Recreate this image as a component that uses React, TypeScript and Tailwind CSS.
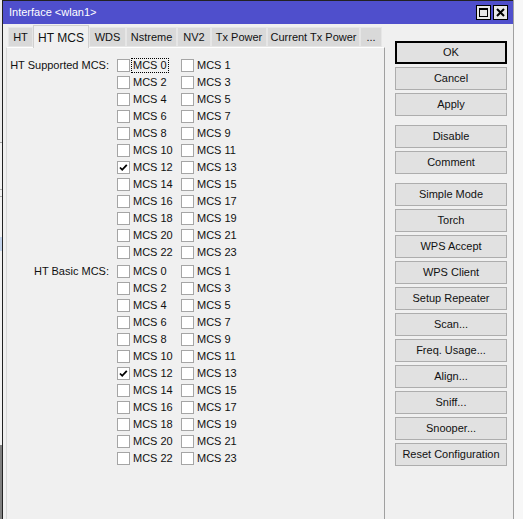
import React from 'react';

// Tabs along the top of the interface window
const tabs = [
  { name: 'HT', w: 'w-[25px]' },
  { name: 'HT MCS', w: 'w-[56px]', active: true },
  { name: 'WDS', w: 'w-[37px]' },
  { name: 'Nstreme', w: 'w-[51px]' },
  { name: 'NV2', w: 'w-[34px]' },
  { name: 'Tx Power', w: 'w-[56px]' },
  { name: 'Current Tx Power', w: 'w-[93px]' },
  { name: '...', w: 'w-[22px]' },
];

// Side buttons, grouped; groups are separated by a larger gap
const buttonGroups = [
  ['OK', 'Cancel', 'Apply'],
  ['Disable', 'Comment'],
  [
    'Simple Mode',
    'Torch',
    'WPS Accept',
    'WPS Client',
    'Setup Repeater',
    'Scan...',
    'Freq. Usage...',
    'Align...',
    'Sniff...',
    'Snooper...',
    'Reset Configuration',
  ],
];

const CheckBox = ({ checked }: { checked?: boolean }) => (
  <div className="w-[13px] h-[13px] shrink-0 bg-white border border-[#a5a5a5] flex items-center justify-center">
    {checked && (
      <svg width="11" height="11" viewBox="0 0 11 11">
        <polyline points="2,5.5 4.2,7.8 8.8,2.8" fill="none" stroke="#000" strokeWidth="1.8" />
      </svg>
    )}
  </div>
);

const McsCell = ({ n, checked, focus }: { n: number; checked?: boolean; focus?: boolean }) => (
  <div className="w-[64px] h-[17px] flex items-center gap-[3px]">
    <CheckBox checked={checked} />
    <span className={focus ? '-ml-[2px] px-[1px] leading-[13px] border border-dotted border-black' : ''}>
      MCS {n}
    </span>
  </div>
);

const McsSection = ({ label, checked, focusFirst }: { label: string; checked: number[]; focusFirst?: boolean }) => {
  const rows = Array.from({ length: 12 }, (_, i) => i * 2);
  return (
    <div className="flex">
      <div className="w-[103px] h-[17px] flex items-center justify-end pr-[1px]">{label}</div>
      <div className="ml-[7px] flex flex-col">
        {rows.map((n) => (
          <div key={n} className="flex">
            <McsCell n={n} checked={checked.includes(n)} focus={focusFirst && n === 0} />
            <McsCell n={n + 1} checked={checked.includes(n + 1)} />
          </div>
        ))}
      </div>
    </div>
  );
};

const SideButton = ({ text }: { text: string }) => (
  <div
    className={
      text === 'OK'
        ? 'h-[23px] flex items-center justify-center bg-[#e1e1e1] border-2 border-black'
        : 'h-[23px] flex items-center justify-center bg-[#e1e1e1] border border-[#adadad]'
    }
  >
    {text}
  </div>
);

const App = () => {
  return (
    <div
      className="flex w-[523px] h-[519px] overflow-hidden bg-[#f0f0f0] text-[11px] text-[#111]"
      style={{ fontFamily: '"Liberation Sans", Arial, sans-serif' }}
    >
      {/* strip of the window behind */}
      <div className="w-[2px] flex flex-col bg-[#f2f2f2]">
        <div className="h-[142px] bg-[#ececec]" />
        <div className="h-[1px] bg-[#a0a0a0]" />
        <div className="h-[46px]" />
        <div className="h-[1px] bg-[#b0b0b0]" />
        <div className="h-[6px]" />
        <div className="h-[1px] bg-[#b0b0b0]" />
        <div className="h-[40px]" />
        <div className="h-[14px] bg-[#c4d4ec]" />
        <div className="h-[194px]" />
        <div className="flex-1 bg-[#808080]" />
      </div>
      <div className="w-[1px] bg-[#222]" />

      {/* interface window */}
      <div className="w-[510px] flex flex-col">
        <div className="h-[1px] bg-[#222]" />
        <div className="h-[23px] bg-[#4f4fcc] flex items-center pl-[6px] pr-[5px] text-white">
          <span className="flex-1">Interface &lt;wlan1&gt;</span>
          <div className="flex gap-[2px]">
            <div className="w-[15px] h-[15px] bg-[#e8e8e8] border border-black flex items-center justify-center">
              <div className="w-[9px] h-[9px] border border-black border-t-2" />
            </div>
            <div className="w-[15px] h-[15px] bg-[#e8e8e8] border border-black flex items-center justify-center">
              <svg width="9" height="9" viewBox="0 0 9 9">
                <path d="M1 1 L8 8 M8 1 L1 8" stroke="#000" strokeWidth="2" />
              </svg>
            </div>
          </div>
        </div>

        <div className="flex-1 flex">
          {/* tabbed panel */}
          <div className="w-[379px] ml-[3px] flex flex-col">
            <div className="h-[23px] flex items-end pl-[2px]">
              {tabs.map((t) =>
                t.active ? (
                  <div
                    key={t.name}
                    className={`${t.w} h-[23px] -mb-[1px] relative bg-[#f0f0f0] border border-b-0 border-[#d0d0d0] flex justify-center pt-[3px] text-[12px]`}
                  >
                    {t.name}
                  </div>
                ) : (
                  <div
                    key={t.name}
                    className={`${t.w} h-[20px] bg-[#d9d9d9] border border-[#e6e6e6] flex items-center justify-center`}
                  >
                    {t.name}
                  </div>
                ),
              )}
            </div>
            <div className="flex-1 border-l border-t border-r border-l-[#d8d8d8] border-t-[#ffffff] border-r-[#a0a0a0] pt-[9px]">
              <McsSection label="HT Supported MCS:" checked={[12]} focusFirst />
              <div className="mt-[2px]">
                <McsSection label="HT Basic MCS:" checked={[12]} />
              </div>
            </div>
          </div>

          {/* buttons */}
          <div className="w-[112px] ml-[10px] pt-[17px] flex flex-col gap-[9px]">
            {buttonGroups.map((g, i) => (
              <div key={i} className="flex flex-col gap-[3px]">
                {g.map((b) => (
                  <SideButton key={b} text={b} />
                ))}
              </div>
            ))}
          </div>
        </div>
      </div>

      <div className="w-[1px] bg-[#a0a0a0]" />
      <div className="flex-1 bg-[#f7f7f7]" />
    </div>
  );
};

export default App;
